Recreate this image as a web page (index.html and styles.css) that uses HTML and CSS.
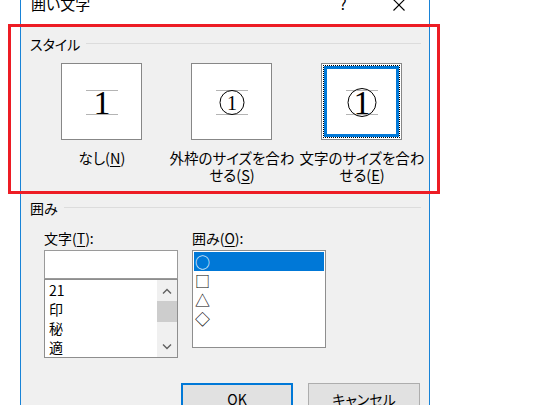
FILE: index.html
```html
<!DOCTYPE html>
<html lang="ja">
<head>
<meta charset="utf-8">
<title>囲い文字</title>
<link rel="stylesheet" href="styles.css">
</head>
<body>
<div class="dialog">
  <div class="titlebar">
    <span class="title">囲い文字</span>
    <span class="tb-help">?</span>
    <span class="tb-close"><svg width="12" height="12" viewBox="0 0 12 12"><path d="M0.5 0.5L11.5 11.5M11.5 0.5L0.5 11.5" class="x-stroke"/></svg></span>
  </div>
  <div class="body">
    <section class="group">
      <div class="group-head"><span>スタイル</span><i class="rule"></i></div>
      <div class="styles">
        <div class="opt">
          <div class="preview">
            <svg width="40" height="36" viewBox="0 0 40 36"><path d="M4 6.5H36M4 30.5H36" class="guide"/><text x="20" y="30" class="digit big">1</text></svg>
          </div>
          <div class="opt-label"><span class="ln">なし(<u>N</u>)</span></div>
        </div>
        <div class="opt">
          <div class="preview">
            <svg width="40" height="36" viewBox="0 0 40 36"><path d="M4 6.5H36M4 30.5H36" class="guide"/><circle cx="20" cy="18.5" r="12" class="ring"/><text x="20" y="25.5" class="digit small">1</text></svg>
          </div>
          <div class="opt-label"><span class="ln">外枠のサイズを合わ</span><span class="ln">せる(<u>S</u>)</span></div>
        </div>
        <div class="opt">
          <div class="preview selected">
            <div class="focus">
              <svg width="40" height="36" viewBox="0 0 40 36"><path d="M4 6.5H36M4 30.5H36" class="guide"/><circle cx="20" cy="18.5" r="14" class="ring"/><text x="20" y="30" class="digit big">1</text></svg>
            </div>
          </div>
          <div class="opt-label"><span class="ln">文字のサイズを合わ</span><span class="ln">せる(<u>E</u>)</span></div>
        </div>
      </div>
    </section>
    <section class="group group-enclose">
      <div class="group-head"><span>囲み</span><i class="rule"></i></div>
      <div class="enclose">
        <div class="field">
          <div class="field-label">文字(<u>T</u>):</div>
          <div class="textbox"></div>
          <div class="charlist">
            <ul class="items">
              <li>21</li>
              <li>印</li>
              <li>秘</li>
              <li>適</li>
            </ul>
            <div class="vscroll">
              <span class="arrow"><svg width="10" height="6" viewBox="0 0 10 6"><path d="M1 5.5L5 1.5L9 5.5" class="chev"/></svg></span>
              <span class="thumb"></span>
              <span class="track"></span>
              <span class="arrow"><svg width="10" height="6" viewBox="0 0 10 6"><path d="M1 0.5L5 4.5L9 0.5" class="chev"/></svg></span>
            </div>
          </div>
        </div>
        <div class="field">
          <div class="field-label">囲み(<u>O</u>):</div>
          <ul class="shapelist">
            <li class="sel">○</li>
            <li>□</li>
            <li>△</li>
            <li>◇</li>
          </ul>
        </div>
      </div>
    </section>
    <div class="buttons">
      <button class="btn btn-default">OK</button>
      <button class="btn">キャンセル</button>
    </div>
  </div>
</div>
<div class="annotation"></div>
</body>
</html>
```

FILE: styles.css
```css
html, body {
  margin: 0;
  padding: 0;
  height: 405px;
  overflow: hidden;
  background: #ffffff;
}

body {
  position: relative;
  font-family: "Noto Sans CJK JP", "Noto Sans", sans-serif;
  font-size: 14px;
  font-feature-settings: "palt";
  color: #000;
}

.dialog {
  margin: -12px 0 0 20px;
  width: 410px;
  box-sizing: border-box;
  border-left: 1px solid #1883d7;
  border-right: 1px solid #1883d7;
  height: 440px;
  display: flex;
  flex-direction: column;
}

.titlebar {
  height: 38px;
  flex: none;
  background: #fff;
  display: flex;
  align-items: flex-start;
  padding: 7px 20px 0 10px;
  box-sizing: border-box;
  line-height: 18px;
  font-size: 15px;
}

.title {
  flex: 1;
}

.tb-help {
  width: 20px;
  text-align: center;
  margin-right: 36px;
}

.tb-close {
  width: 20px;
  display: flex;
  justify-content: center;
  padding-top: 4px;
}

.x-stroke {
  stroke: #000;
  stroke-width: 1.1;
  fill: none;
}

.body {
  flex: 1;
  background: #f0f0f0;
  padding: 9px 8px 0 9px;
}

.group-head {
  display: flex;
  align-items: center;
  line-height: 18px;
  height: 18px;
}

.rule {
  flex: 1;
  height: 1px;
  background: #dcdcdc;
  margin-left: 6px;
  margin-top: -2px;
}

.styles {
  display: grid;
  grid-template-columns: repeat(3, 130px);
  margin: 10px 0 0 7px;
}

.opt {
  display: flex;
  flex-direction: column;
}

.preview {
  width: 81px;
  height: 77px;
  box-sizing: border-box;
  margin-left: 24px;
  border: 1px solid #878787;
  background: #fff;
  display: flex;
  align-items: center;
  justify-content: center;
}

.preview.selected {
  padding: 1px;
  align-items: stretch;
  justify-content: stretch;
}

.focus {
  flex: 1;
  border: 1px dotted #000;
  box-shadow: inset 0 0 0 3px #0078d7;
  display: flex;
  align-items: center;
  justify-content: center;
}

.guide {
  stroke: #b4b4b4;
  stroke-width: 1;
  fill: none;
}

.ring {
  fill: none;
  stroke: #000;
  stroke-width: 1;
}

.digit {
  font-family: "Liberation Serif", "DejaVu Serif", serif;
  text-anchor: middle;
  fill: #000;
}

.digit.big {
  font-size: 34px;
}

.digit.small {
  font-size: 20px;
}

.opt-label {
  margin-top: 9px;
  text-align: center;
  white-space: nowrap;
  display: flex;
  flex-direction: column;
  align-items: center;
}

.ln {
  display: block;
  height: 17px;
  line-height: 17px;
  font-size: 14.5px;
}

u {
  text-decoration: underline;
  text-underline-offset: 2px;
}

.group-enclose {
  margin-top: 16px;
}

.enclose {
  display: flex;
  gap: 14px;
  margin: 12px 0 0 14px;
}

.field {
  width: 134px;
  display: flex;
  flex-direction: column;
}

.field-label {
  line-height: 18px;
  margin-bottom: 3px;
}

.textbox {
  height: 29px;
  box-sizing: border-box;
  border: 1px solid #9a9a9a;
  background: #fff;
}

.charlist {
  height: 79px;
  box-sizing: border-box;
  border: 1px solid #8e8e8e;
  background: #fff;
  display: flex;
}

.items {
  list-style: none;
  margin: 0;
  padding: 1px 0 0 4px;
  flex: 1;
  font-size: 14px;
}

.items li {
  height: 19px;
  line-height: 19px;
}

.vscroll {
  width: 20px;
  background: #f0f0f0;
  display: flex;
  flex-direction: column;
}

.arrow {
  height: 21px;
  display: flex;
  align-items: center;
  justify-content: center;
  flex: none;
}

.chev {
  stroke: #606060;
  stroke-width: 1.4;
  fill: none;
}

.thumb {
  height: 21px;
  background: #cdcdcd;
  flex: none;
}

.track {
  flex: 1;
}

.shapelist {
  list-style: none;
  margin: 0;
  padding: 1px;
  height: 98px;
  box-sizing: border-box;
  border: 1px solid #8e8e8e;
  background: #fff;
  font-size: 15px;
}

.shapelist li {
  height: 19px;
  line-height: 19px;
  padding-left: 1px;
  font-feature-settings: normal;
}

.shapelist li.sel {
  background: #0078d7;
  color: #fff;
}

.buttons {
  display: flex;
  justify-content: flex-end;
  gap: 15px;
  margin: 25px 1px 0 0;
}

.btn {
  width: 112px;
  height: 32px;
  box-sizing: border-box;
  background: #e1e1e1;
  border: 1px solid #adadad;
  font-family: inherit;
  font-size: 14px;
  color: #000;
  padding: 0;
  font-feature-settings: "palt";
}

.btn-default {
  border: 2px solid #0078d7;
}

.annotation {
  position: absolute;
  left: 8px;
  top: 24px;
  width: 432px;
  height: 170px;
  box-sizing: border-box;
  border: 3px solid #ed1c24;
  pointer-events: none;
}
```
